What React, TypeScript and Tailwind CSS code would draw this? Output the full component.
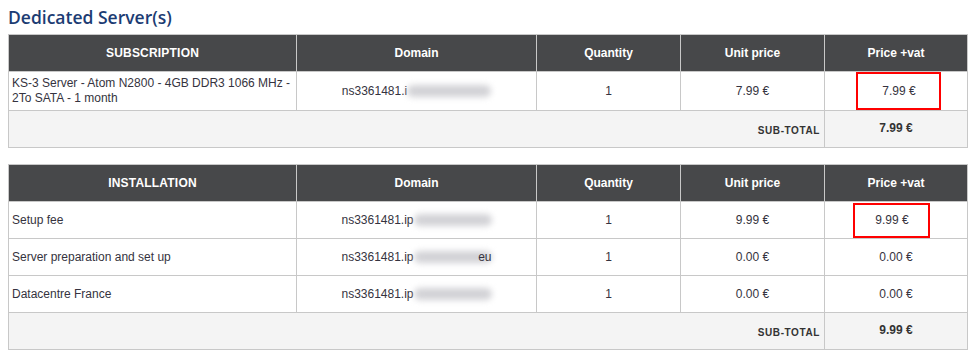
import React from "react";

const Blur = ({ w, tail }: { w: number; tail?: string }) => (
  <span className="relative inline-block align-middle" style={{ width: w }}>
    <span className="block h-[12px] rounded-full bg-[#d2d2d6] blur-[3px]" />
    {tail ? <span className="absolute right-0 top-1/2 -translate-y-1/2 text-[12px] leading-none">{tail}</span> : null}
  </span>
);

const Domain = ({ prefix, w, tail }: { prefix: string; w: number; tail?: string }) => (
  <span className="inline-flex items-center">
    <span>{prefix}</span>
    <Blur w={w} tail={tail} />
  </span>
);

type Row = { name: React.ReactNode; prefix: string; blur: number; tail?: string; unit: string; price: string; boxed?: boolean };

const Table = ({ title, rows, total, boxClass }: { title: string; rows: Row[]; total: string; boxClass: string }) => (
  <table className="w-[959px] table-fixed border-collapse border border-[#c8c8c8] text-[12px] text-[#353340]">
    <colgroup>
      <col className="w-[288px]" />
      <col className="w-[240px]" />
      <col className="w-[144px]" />
      <col className="w-[144px]" />
      <col className="w-[143px]" />
    </colgroup>
    <thead>
      <tr className="h-[37px] bg-[#47484a] text-white font-bold">
        <th className="border border-[#c8c8c8] font-bold tracking-[0.2px]">{title}</th>
        <th className="border border-[#c8c8c8] font-bold">Domain</th>
        <th className="border border-[#c8c8c8] font-bold">Quantity</th>
        <th className="border border-[#c8c8c8] font-bold">Unit price</th>
        <th className="border border-[#c8c8c8] font-bold">Price +vat</th>
      </tr>
    </thead>
    <tbody>
      {rows.map((r, i) => (
        <tr key={i} className="bg-white">
          <td className="border border-[#c8c8c8] px-[3px] py-[3px] h-[37px] leading-[15px]">{r.name}</td>
          <td className="border border-[#c8c8c8] text-center">
            <Domain prefix={r.prefix} w={r.blur} tail={r.tail} />
          </td>
          <td className="border border-[#c8c8c8] text-center">1</td>
          <td className="border border-[#c8c8c8] text-center">{r.unit}</td>
          <td className="border border-[#c8c8c8] text-center p-0">
            {r.boxed ? (
              <div className={boxClass}>{r.price}</div>
            ) : (
              r.price
            )}
          </td>
        </tr>
      ))}
      <tr className="h-[37px] bg-[#f4f4f4]">
        <td colSpan={4} className="border border-[#c8c8c8] pr-[4px] pt-[2px] text-right text-[10px] font-bold tracking-[0.6px] text-[#333]">
          SUB-TOTAL
        </td>
        <td className="border border-[#c8c8c8] text-center pb-[2px] font-bold text-[#333]">{total}</td>
      </tr>
    </tbody>
  </table>
);

export default function App() {
  return (
    <div className="w-[972px] h-[359px] bg-white px-[8px] pt-[6px]" style={{ fontFamily: '"Liberation Sans", Arial, sans-serif' }}>
      <h1 className="h-[28px] text-[17.5px] font-semibold leading-[22px] text-[#1c3c73]" style={{ fontFamily: '"Open Sans", sans-serif' }}>
        Dedicated Server(s)
      </h1>
      <div className="flex flex-col gap-[16px]">
        <Table
          title="SUBSCRIPTION"
          total="7.99 €"
          boxClass="ml-[31px] flex h-[38px] w-[85px] items-center justify-center border-2 border-[#ff0000] pl-[1px]"
          rows={[
            {
              name: (
                <>
                  KS-3 Server - Atom N2800 - 4GB DDR3 1066 MHz -<br />2To SATA - 1 month
                </>
              ),
              prefix: "ns3361481.i",
              blur: 84,
              unit: "7.99 €",
              price: "7.99 €",
              boxed: true,
            },
          ]}
        />
        <Table
          title="INSTALLATION"
          total="9.99 €"
          boxClass="ml-[28px] flex h-[35px] w-[77px] items-center justify-center border-2 border-[#ff0000] pl-[1px]"
          rows={[
            { name: "Setup fee", prefix: "ns3361481.ip", blur: 78, unit: "9.99 €", price: "9.99 €", boxed: true },
            { name: "Server preparation and set up", prefix: "ns3361481.ip", blur: 78, tail: "eu", unit: "0.00 €", price: "0.00 €" },
            { name: "Datacentre France", prefix: "ns3361481.ip", blur: 78, unit: "0.00 €", price: "0.00 €" },
          ]}
        />
      </div>
    </div>
  );
}
